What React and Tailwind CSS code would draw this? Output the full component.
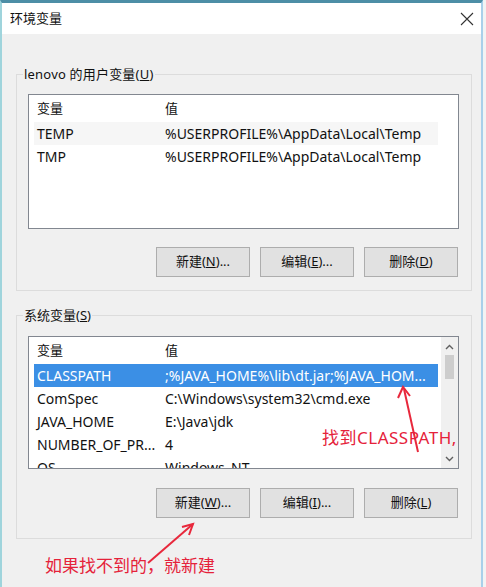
import React from 'react';

const FONT = { fontFamily: '"Noto Sans", "Noto Sans CJK SC", sans-serif' };

const Btn = ({ label, k, tail = '' }) => (
    <button className="w-[94px] h-[30px] bg-[#e1e1e1] border border-[#adadad] text-[13px] text-[#111] flex items-center justify-center">
        {label}(<span className="underline">{k}</span>){tail}
    </button>
);

const Row = ({ name, value, selected, shaded }) => (
    <div className={`h-[23px] w-[404px] flex items-center text-[14px] leading-[18px] ${selected ? 'bg-[#3b8fe5] text-white' : shaded ? 'bg-[#f6f6f6] text-[#111]' : 'text-[#111]'}`}>
        <div className="w-[128px] pl-[3px] whitespace-nowrap overflow-hidden">{name}</div>
        <div className="flex-1 pl-[3px] whitespace-nowrap overflow-hidden">{value}</div>
    </div>
);

const Header = () => (
    <div className="h-[27px] w-[404px] flex items-center text-[13px] text-[#111]">
        <div className="w-[128px] pl-[3px]">变量</div>
        <div className="flex-1 pl-[3px]">值</div>
    </div>
);

export default function App() {
    return (
        <div className="relative w-[486px] h-[587px] bg-[#f3f3f3] overflow-hidden" style={FONT}>
            {/* window */}
            <div className="w-[483px] h-[587px] flex flex-col bg-[#f0f0f0] border-t-[3px] border-t-[#4d8ea6] border-l-2 border-l-[#9fd4dc] border-r-2 border-r-[#a9d0ea]">
                {/* title bar */}
                <div className="h-[31px] bg-white flex items-center justify-between pl-[8px] pr-[7px] shrink-0">
                    <span className="text-[13px] text-[#111]">环境变量</span>
                    <svg width="14" height="14" viewBox="0 0 14 14">
                        <path d="M1 1 L13 13 M13 1 L1 13" stroke="#333" strokeWidth="1.1" />
                    </svg>
                </div>

                {/* user vars */}
                <fieldset className="mt-[32px] ml-[14px] w-[456px] border border-[#dcdcdc] px-[11px] pb-[13px]">
                    <legend className="ml-[-5px] px-[1px] text-[13px] leading-[17px] text-[#111] tracking-[0.2px]">
                        lenovo 的用户变量(<span className="underline">U</span>)
                    </legend>
                    <div className="mt-[11px] w-[431px] h-[135px] bg-white border border-[#828790] pl-[5px] overflow-hidden">
                        <Header />
                        <Row name="TEMP" value="%USERPROFILE%\AppData\Local\Temp" shaded />
                        <Row name="TMP" value="%USERPROFILE%\AppData\Local\Temp" />
                    </div>
                    <div className="mt-[18px] flex justify-end gap-[10px] pr-[2px]">
                        <Btn label="新建" k="N" tail="..." />
                        <Btn label="编辑" k="E" tail="..." />
                        <Btn label="删除" k="D" />
                    </div>
                </fieldset>

                {/* system vars */}
                <fieldset className="mt-[16px] ml-[14px] w-[456px] border border-[#dcdcdc] px-[11px] pb-[20px]">
                    <legend className="ml-[-5px] px-[1px] text-[13px] leading-[17px] text-[#111]">
                        系统变量(<span className="underline">S</span>)
                    </legend>
                    <div className="mt-[12px] w-[431px] h-[133px] bg-white border border-[#828790] flex overflow-hidden">
                        <div className="flex-1 pl-[5px] overflow-hidden">
                            <Header />
                            <Row name="CLASSPATH" value=";%JAVA_HOME%\lib\dt.jar;%JAVA_HOM..." selected />
                            <Row name="ComSpec" value="C:\Windows\system32\cmd.exe" />
                            <Row name="JAVA_HOME" value="E:\Java\jdk" />
                            <Row name="NUMBER_OF_PR..." value="4" />
                            <Row name="OS" value="Windows_NT" />
                        </div>
                        <div className="w-[17px] bg-[#f0f0f0] flex flex-col items-center">
                            <svg width="9" height="6" viewBox="0 0 9 6" className="mt-[7px]">
                                <path d="M1 5 L4.5 1.5 L8 5" stroke="#606060" strokeWidth="1.4" fill="none" />
                            </svg>
                            <div className="mt-[5px] w-[9px] h-[24px] bg-[#cdcdcd]" />
                            <div className="flex-1" />
                            <svg width="9" height="6" viewBox="0 0 9 6" className="mb-[6px]">
                                <path d="M1 1 L4.5 4.5 L8 1" stroke="#606060" strokeWidth="1.4" fill="none" />
                            </svg>
                        </div>
                    </div>
                    <div className="mt-[19px] flex justify-end gap-[10px] pr-[2px]">
                        <Btn label="新建" k="W" tail="..." />
                        <Btn label="编辑" k="I" tail="..." />
                        <Btn label="删除" k="L" />
                    </div>
                </fieldset>
            </div>

            {/* red annotations */}
            <svg className="absolute left-0 top-0 pointer-events-none" width="486" height="587">
                <path d="M418 452 L404 389" stroke="#e8283c" strokeWidth="2" fill="none" />
                <path d="M398 398 L403 387 L410 396" stroke="#e8283c" strokeWidth="2" fill="none" />
                <path d="M148 563 L193 524" stroke="#e8283c" strokeWidth="2" fill="none" />
                <path d="M182 527 L193 524 L189 535" stroke="#e8283c" strokeWidth="2" fill="none" />
            </svg>
            <div className="absolute left-[322px] top-[427px] text-[17px] leading-[22px] text-[#e5223a] whitespace-nowrap tracking-[0.5px]">
                找到CLASSPATH,
            </div>
            <div className="absolute left-[45px] top-[555px] text-[17px] leading-[22px] text-[#e5223a] whitespace-nowrap">
                如果找不到的，就新建
            </div>
        </div>
    );
}
